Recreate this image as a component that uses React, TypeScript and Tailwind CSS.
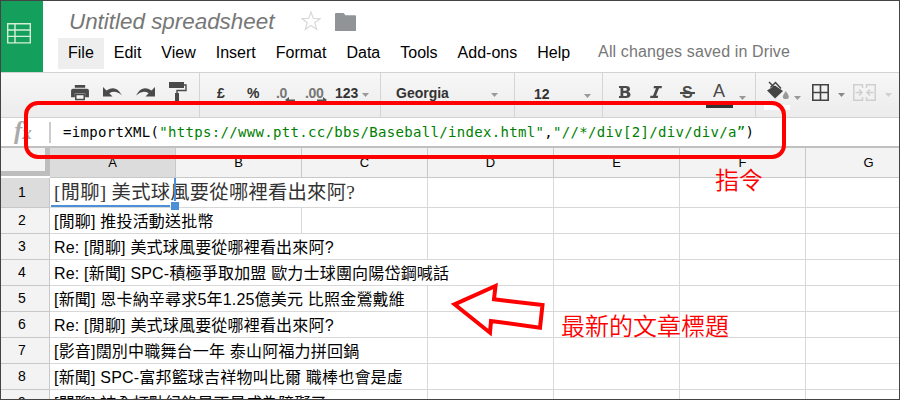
import type { ReactNode } from "react";

const menus = ["File", "Edit", "View", "Insert", "Format", "Data", "Tools", "Add-ons", "Help"];
const columns = ["A", "B", "C", "D", "E", "F", "G"];

// `span` is the number of columns that the text of column A runs over
const rows = [
  { text: "[閒聊] 美式球風要從哪裡看出來阿?", span: 3 },
  { text: "[閒聊] 推投活動送批幣", span: 2 },
  { text: "Re: [閒聊] 美式球風要從哪裡看出來阿?", span: 3 },
  { text: "Re: [新聞] SPC-積極爭取加盟 歐力士球團向陽岱鋼喊話", span: 4 },
  { text: "[新聞] 恩卡納辛尋求5年1.25億美元 比照金鶯戴維", span: 3 },
  { text: "Re: [閒聊] 美式球風要從哪裡看出來阿?", span: 3 },
  { text: "[影音]闊別中職舞台一年 泰山阿福力拼回鍋", span: 3 },
  { text: "[新聞] SPC-富邦籃球吉祥物叫比爾 職棒也會是虛", span: 3 },
  { text: "[閒聊] 被全打點紀錄是不是成為障礙了", span: 3 },
];

function Caret({ className = "" }: { className?: string }) {
  return (
    <svg className={`h-1 w-[7px] shrink-0 ${className}`} viewBox="0 0 7 4">
      <path d="M0 0h7L3.5 4z" fill="currentColor" />
    </svg>
  );
}

function Group({ className, children }: { className: string; children: ReactNode }) {
  return <div className={`flex h-full shrink-0 items-start border-r border-[#d4d4d4] ${className}`}>{children}</div>;
}

function Header() {
  return (
    <header className="flex h-[71px] shrink-0 bg-white">
      <div className="w-[42px] shrink-0 bg-[#159f5c] pl-1.5 pt-[22px]">
        <svg width="24" height="21" viewBox="0 0 24 21" fill="none" stroke="#d6efd9" strokeWidth="1.4">
          <path d="M.7.7h22.6v19.2H.7zM.7 7h22.6M.7 13.4h22.6M8 .7v19.2" />
        </svg>
      </div>
      <div className="flex flex-col pl-[15px]">
        <div className="flex h-[37px] items-start">
          <h1 className="pl-[11px] pt-[5px] text-[22.4px] leading-8 italic text-[#777] whitespace-nowrap">Untitled spreadsheet</h1>
          <svg className="ml-[27px] mt-[10px]" width="20" height="20" viewBox="0 0 20 20" fill="none" stroke="#d9d9d9" strokeWidth="1.2">
            <path d="m10 1 2.3 6.4 6.9.2-5.5 4.1 2 6.6L10 14.4l-5.7 3.9 2-6.6L.8 7.6l6.9-.2z" />
          </svg>
          <svg className="ml-[14px] mt-3" width="21" height="18" viewBox="0 0 21 18">
            <path d="M0 1q0-1 1-1h7.5l2 2.3h9.5q1 0 1 1V18H0z" fill="#919497" />
          </svg>
        </div>
        <nav className="flex h-[31px] text-base leading-[29px] text-black">
          {menus.map((m) => (
            <span key={m} className={`px-2.5 ${m === "File" ? "bg-[#eee]" : ""}`}>{m}</span>
          ))}
          <span className="pl-[18px] leading-[27px] tracking-[0.13px] whitespace-nowrap text-[#777]">All changes saved in Drive</span>
        </nav>
      </div>
    </header>
  );
}

function Toolbar() {
  return (
    <div className="flex h-[46px] shrink-0 border-y border-[#d2d2d2] bg-linear-to-b from-[#f7f7f7] to-[#ececec] text-sm leading-[40px] font-bold text-[#333]">
      <Group className="w-[199px] gap-[14px] pt-2 pl-[70px] text-[#4a4a4a]">
        <svg className="mt-1" width="18" height="16" viewBox="0 0 19 17" fill="currentColor">
          <path d="M4 0h11v3H4zM2 4h15q2 0 2 2v7h-4V9H4v4H0V6q0-2 2-2z" />
          <path d="M5 10h9v5.500H5z" fill="#f4f4f4" stroke="currentColor" strokeWidth="1.6" />
        </svg>
        <svg className="mt-[6px]" width="19" height="11" viewBox="0 0 19 11" fill="currentColor">
          <path d="M0 0v9.500h9.500L6.300 6.300Q12.500 2.500 19 8.500 13-3 3.500 3.500z" />
        </svg>
        <svg className="mt-[6px]" width="19" height="11" viewBox="0 0 19 11" fill="currentColor">
          <path d="M19 0v9.500H9.500l3.200-3.200Q6.500 2.500 0 8.500 6-3 15.500 3.500z" />
        </svg>
        <svg className="mt-[1px]" width="18" height="20" viewBox="0 0 18 20" fill="currentColor">
          <path d="M0 0h15v6H0z" />
          <path d="M15 3h2v5.5H8V12" fill="none" stroke="currentColor" strokeWidth="1.4" />
          <path d="M6 11h4v9H6z" />
        </svg>
      </Group>
      <Group className="w-[181px] pl-[17px]">
        <span className="w-[30px]">£</span>
        <span className="w-[29px]">%</span>
        <span className="relative w-[29px] text-[14px] tracking-[-0.4px] text-[#777]">
          .0
          <svg className="absolute top-[24px] left-[9px]" width="10" height="6" viewBox="0 0 10 6"><path d="M10 2.5H4V0L0 3l4 3V4h6z" fill="#555" /></svg>
        </span>
        <span className="relative w-[30px] text-[14px] tracking-[-0.4px] text-[#777]">
          .00
          <svg className="absolute top-[24px] left-[12px]" width="10" height="6" viewBox="0 0 10 6"><path d="M0 2.5h6V0l4 3-4 3V4H0z" fill="#555" /></svg>
        </span>
        <span>123</span>
        <Caret className="mt-5 ml-[4px] text-[#999]" />
      </Group>
      <Group className="w-[134px] pl-[15px]">
        <span className="w-[95px]">Georgia</span>
        <Caret className="mt-5 text-[#999]" />
      </Group>
      <Group className="w-[88px] pl-[19px]">
        <span className="w-[50px] pt-px">12</span>
        <Caret className="mt-[21px] text-[#999]" />
      </Group>
      <Group className="w-[153px] pl-4 text-[#4a4a4a]">
        <svg className="mt-[13px] mr-[20px]" width="12" height="12" viewBox="0 0 12 12" fill="currentColor" fillRule="evenodd">
          <path d="M0 0h7q4 0 4 3 0 2-1.800 2.700Q11.500 6.400 11.500 8.600 11.500 12 7.200 12H0V10h1.500V2H0zM4.300 2v2.800h2q1.600 0 1.600-1.400T6.300 2zM4.300 6.900V10h2.200q1.700 0 1.700-1.600T6.500 6.900z" />
        </svg>
        <svg className="mt-[13px] mr-[20px] ml-[-1px]" width="12" height="12" viewBox="0 0 12 12" fill="currentColor">
          <path d="M4 0h8l-.5 2.200H9L6 9.800h2.200L7.700 12H0l.5-2.200H3L6 2.200H3.500z" />
        </svg>
        <span className="relative w-[31px] text-[16px] leading-[39px]">
          S<i className="absolute top-[19px] -left-[2px] h-[1.5px] w-[15px] bg-[#4a4a4a]" />
        </span>
        <span className="relative w-[26px] text-[18px] leading-[37px] font-normal">
          A<i className="absolute top-[32px] -left-[7px] h-[3px] w-[27px] bg-[#333]" />
        </span>
        <Caret className="mt-[23px] text-[#999]" />
      </Group>
      <div className="flex items-start pl-[11px] pt-2 text-[#444]">
        <div className="relative">
          <svg width="22" height="19" viewBox="0 0 22 19" fill="currentColor">
            <path d="M0 9.500 8 4.500l8 5.500-8 7.500z" />
            <path d="m2 1 7 7M3.500 6.500l5-5 5.500 6" fill="none" stroke="currentColor" strokeWidth="1.500" />
            <path d="M18.800 10q6 8 0 8t0-8z" fill="#999" />
          </svg>
          <i className="absolute top-[24px] -left-[3px] h-[5px] w-[26px] bg-white" />
        </div>
        <Caret className="mt-[15px] ml-[5px] text-[#999]" />
        <svg className="mt-[3px] ml-[11px]" width="17" height="17" viewBox="0 0 17 17" fill="none" stroke="currentColor" strokeWidth="1.6">
          <path d="M.8.8h15.400v15.400H.8zM8.500 1v15M1 8.500h15" />
        </svg>
        <Caret className="mt-[12px] ml-[9px] text-[#888]" />
        <svg className="mt-[3px] ml-[8px]" width="23" height="17" viewBox="0 0 23 17" fill="none" stroke="#cfcfcf" strokeWidth="1.5">
          <path d="M9.500 4V.8H.8v15.400h8.700V13M13.500 4V.8h8.700v15.400h-8.700V13M2.500 8.500h6M6 5.500l3 3-3 3M20.500 8.500h-6M17 5.500l-3 3 3 3" />
        </svg>
        <Caret className="mt-[12px] ml-[9px] text-[#d0d0d0]" />
      </div>
    </div>
  );
}

function FormulaBar() {
  return (
    <div className="flex h-[30px] shrink-0 items-start border-b-2 border-[#c0c0c0] bg-white">
      <span className="w-12 pl-[13px] font-['Liberation_Serif'] text-[25px] leading-[26px] font-bold whitespace-nowrap text-[#aaa] italic">
        f<span className="text-[19px]">x</span>
      </span>
      <span className="mt-1 h-[21px] w-0.5 bg-[#ccc]" />
      <code className="ml-3 font-['DejaVu_Sans_Mono'] text-[14px] leading-[28px] tracking-[0.32px] whitespace-pre text-black">
        =importXML(<span className="text-[#008000]">"https://www.ptt.cc/bbs/Baseball/index.html"</span>,
        <span className="text-[#008000]">"//*/div[2]/div/div/a”</span>)
      </code>
    </div>
  );
}

function Sheet() {
  return (
    <div className="grid w-[931px] shrink-0 grid-cols-[49px_repeat(7,126px)] bg-white text-[13px] text-black">
      <div className="mb-[2px] h-[28px] border-r-[5px] border-b-[5px] border-[#bdbdbd] bg-[#f3f3f3]" />
      {columns.map((c, i) => (
        <div key={c} className={`h-[30px] border-r border-b border-[#c8c8c8] text-center leading-[29px] ${i === 0 ? "bg-[#dcdcdc]" : "bg-[#f3f3f3]"}`}>{c}</div>
      ))}
      {rows.map((row, r) => (
        <div key={r} className={`col-span-8 grid grid-cols-subgrid ${r === 0 ? "h-[30px] grid-rows-[30px]" : "h-[26px] grid-rows-[26px]"}`}>
          <div className={`border-r border-b border-[#c8c8c8] pr-[6px] text-center text-[14px] ${r === 0 ? "bg-[#dcdcdc] leading-[29px]" : "bg-[#f3f3f3] leading-[25px]"}`}>{r + 1}</div>
          {columns.map((c, i) => (
            <div key={c} className={`border-b border-[#d8d8d8] whitespace-nowrap ${i < row.span - 1 ? "" : "border-r"}`}>
              {i === 0 && (
                <span className={`relative block w-0 pl-1 ${r === 0 ? "font-['Liberation_Serif','Noto_Sans_CJK_TC',serif] text-[19.3px] leading-[30px] tracking-[0.27px] text-[#333]" : "text-base leading-[27px] tracking-[0.19px]"}`}>{row.text}</span>
              )}
            </div>
          ))}
        </div>
      ))}
    </div>
  );
}

export default function App() {
  return (
    <div className="relative h-[400px] w-[900px] overflow-hidden border border-[#444] font-['Liberation_Sans','Noto_Sans_CJK_TC',sans-serif]">
      <div className="flex h-full flex-col overflow-hidden">
        <Header />
        <Toolbar />
        <FormulaBar />
        <Sheet />
      </div>

      {/* selected cell */}
      <i className="absolute top-[204px] left-[50px] h-0.5 w-[119px] bg-[#4a90d9]" />
      <i className="absolute top-[177px] left-[173px] h-[23px] w-0.5 bg-[#4a90d9]" />
      <i className="absolute top-[201px] left-[170px] size-2 bg-[#4a90d9]" />

      {/* annotations */}
      <div className="absolute top-[100px] left-[23px] h-[58px] w-[762px] rounded-[14px] border-4 border-[#f00]" />
      <p className="absolute top-[163px] left-[714px] text-[24px] leading-[34px] font-[350] whitespace-nowrap text-[#f00]">指令</p>
      <p className="absolute top-[309px] left-[560px] text-[24px] leading-[34px] font-[350] whitespace-nowrap text-[#f00]">最新的文章標題</p>
      <svg className="absolute top-[279px] left-[447px]" width="104" height="64" viewBox="448 280 104 64" fill="none" stroke="#f00" strokeWidth="4">
        <path d="m454.500 304.300 41-18.300-1.500 13.300 48.500 5.700-2.500 22.700-49-6.700-1 11.700z" />
      </svg>
    </div>
  );
}
